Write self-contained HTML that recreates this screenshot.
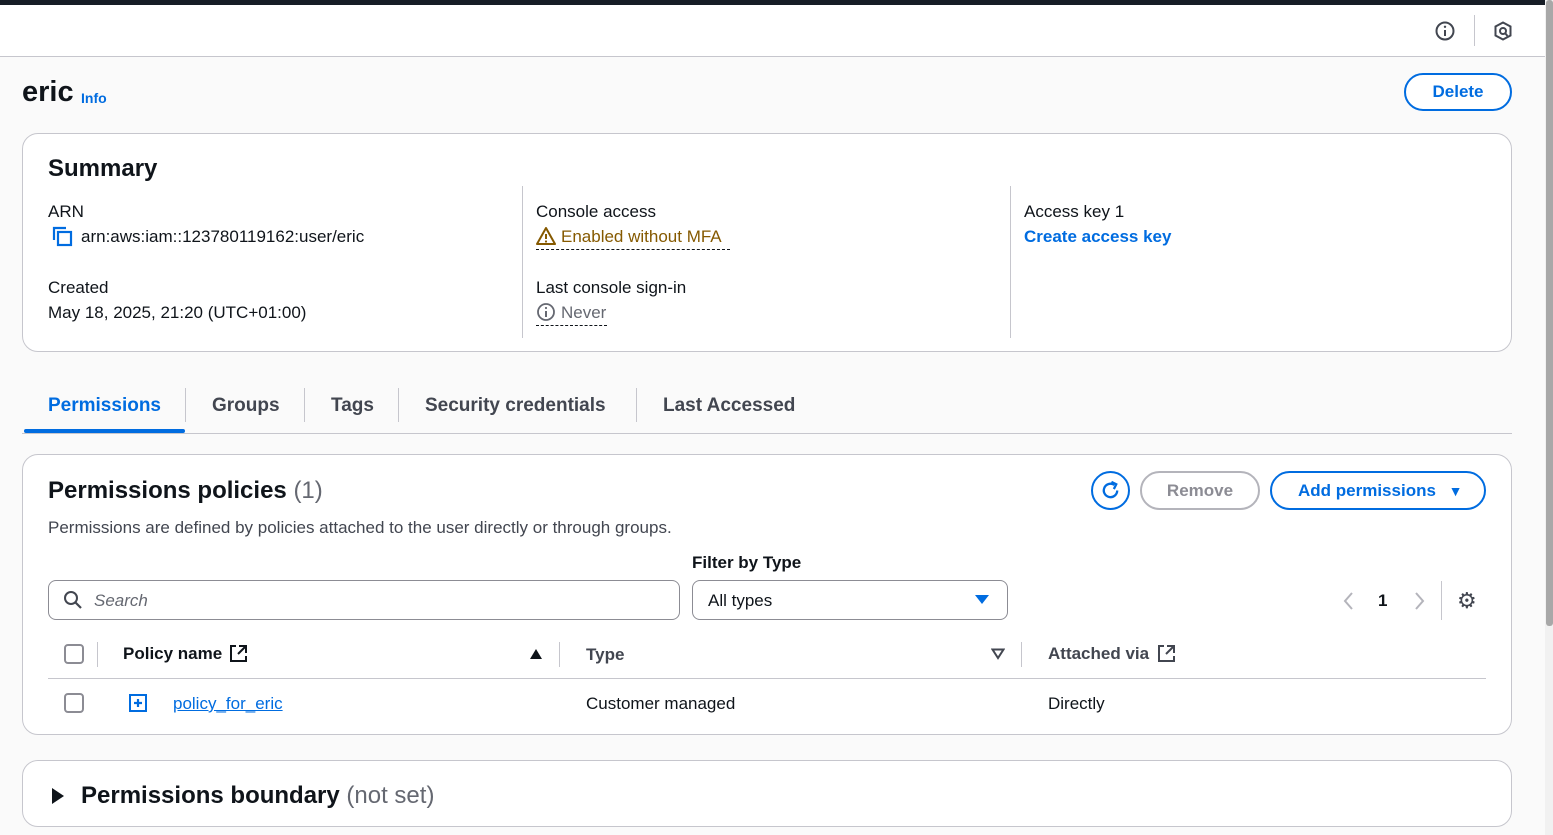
<!DOCTYPE html>
<html><head><meta charset="utf-8"><style>
*{box-sizing:border-box;margin:0;padding:0}
body{width:1553px;height:835px;overflow:hidden;background:#fafafa;font-family:"Liberation Sans",sans-serif;color:#0f141a;position:relative;font-size:16px}
.abs{position:absolute;white-space:nowrap}
.top{position:absolute;left:0;top:0;width:1553px;height:5px;background:#161d26}
.hdr{position:absolute;left:0;top:5px;width:1545px;height:52px;background:#fff;border-bottom:1px solid #c6c6cd}
.sb{position:absolute;left:1545px;top:0;width:8px;height:835px;background:#f1f1f1}
.sbt{position:absolute;left:1546px;top:0;width:7px;height:626px;background:#a8a8a8;border-radius:3px}
.card{position:absolute;background:#fff;border:1px solid #c6c6cd;border-radius:16px}
.btn{position:absolute;border:2px solid #006ce0;border-radius:20px;color:#006ce0;font-weight:bold;font-size:17px;text-align:center;background:#fff}
.lbl{color:#0f141a;font-size:17px}
.blue{color:#006ce0}
.vline{position:absolute;width:1px;background:#c6c6cd}
.tab{position:absolute;top:395px;font-size:19px;font-weight:bold;color:#424650}
.cb{position:absolute;width:20px;height:20px;border:2px solid #8c8c94;border-radius:4px;background:#fff}
</style></head><body>
<div class="top"></div>
<div class="hdr"></div>
<svg class="abs" style="left:1434px;top:20px" width="22" height="22" viewBox="0 0 22 22"><circle cx="11" cy="11" r="8.5" fill="none" stroke="#424650" stroke-width="2"/><line x1="11" y1="10" x2="11" y2="16" stroke="#424650" stroke-width="2"/><circle cx="11" cy="6.8" r="1.2" fill="#424650"/></svg>
<div class="vline" style="left:1474px;top:15px;height:31px"></div>
<svg class="abs" style="left:1492px;top:20px" width="22" height="22" viewBox="0 0 22 22"><path d="M11 2.5 L18.5 6.5 V15.5 L11 19.5 L3.5 15.5 V6.5 Z" fill="none" stroke="#424650" stroke-width="2"/><circle cx="11" cy="11" r="3" fill="none" stroke="#424650" stroke-width="2"/><path d="M13 13 L15.5 16" stroke="#424650" stroke-width="2"/></svg>

<div class="abs" style="left:22px;top:76px;font-size:29px;font-weight:bold">eric</div>
<div class="abs blue" style="left:81px;top:90px;font-size:14px;font-weight:bold">Info</div>
<div class="btn" style="left:1404px;top:73px;width:108px;height:38px;line-height:34px">Delete</div>

<div class="card" style="left:22px;top:133px;width:1490px;height:219px"></div>
<div class="abs" style="left:48px;top:155px;font-size:24px;font-weight:bold">Summary</div>
<div class="vline" style="left:522px;top:186px;height:152px"></div>
<div class="vline" style="left:1010px;top:186px;height:152px"></div>
<div class="abs lbl" style="left:48px;top:202px">ARN</div>
<svg class="abs" style="left:52px;top:226px" width="22" height="22" viewBox="0 0 22 22"><path d="M2 14 V2 H14" fill="none" stroke="#006ce0" stroke-width="2.2"/><rect x="6" y="6" width="13" height="13" fill="none" stroke="#006ce0" stroke-width="2.2"/></svg>
<div class="abs lbl" style="left:81px;top:227px">arn:aws:iam::123780119162:user/eric</div>
<div class="abs lbl" style="left:48px;top:278px">Created</div>
<div class="abs lbl" style="left:48px;top:303px">May 18, 2025, 21:20 (UTC+01:00)</div>
<div class="abs lbl" style="left:536px;top:202px">Console access</div>
<div class="abs" style="left:536px;top:226px;width:194px;height:24px;border-bottom:1px dashed #0f141a"></div>
<svg class="abs" style="left:536px;top:226px" width="20" height="20" viewBox="0 0 20 20"><path d="M10 2 L19 18 H1 Z" fill="none" stroke="#855900" stroke-width="2" stroke-linejoin="round"/><line x1="10" y1="8" x2="10" y2="13" stroke="#855900" stroke-width="2"/><circle cx="10" cy="15.5" r="1.1" fill="#855900"/></svg>
<div class="abs" style="left:561px;top:227px;color:#855900;font-size:17px">Enabled without MFA</div>
<div class="abs lbl" style="left:536px;top:278px">Last console sign-in</div>
<svg class="abs" style="left:536px;top:302px" width="20" height="20" viewBox="0 0 20 20"><circle cx="10" cy="10" r="8" fill="none" stroke="#656871" stroke-width="1.8"/><line x1="10" y1="9" x2="10" y2="15" stroke="#656871" stroke-width="2"/><circle cx="10" cy="6" r="1.1" fill="#656871"/></svg>
<div class="abs" style="left:561px;top:303px;color:#656871;font-size:17px">Never</div>
<div class="abs" style="left:536px;top:325px;width:71px;border-bottom:1px dashed #0f141a"></div>
<div class="abs lbl" style="left:1024px;top:202px">Access key 1</div>
<div class="abs blue" style="left:1024px;top:227px;font-weight:bold;font-size:17px">Create access key</div>

<div class="tab" style="left:48px;color:#006ce0">Permissions</div>
<div class="tab" style="left:212px">Groups</div>
<div class="tab" style="left:331px">Tags</div>
<div class="tab" style="left:425px">Security credentials</div>
<div class="tab" style="left:663px">Last Accessed</div>
<div class="vline" style="left:185px;top:388px;height:34px"></div>
<div class="vline" style="left:304px;top:388px;height:34px"></div>
<div class="vline" style="left:398px;top:388px;height:34px"></div>
<div class="vline" style="left:636px;top:388px;height:34px"></div>
<div class="abs" style="left:22px;top:433px;width:1490px;height:1px;background:#c6c6cd"></div>
<div class="abs" style="left:24px;top:429px;width:161px;height:4px;background:#006ce0;border-radius:2px"></div>

<div class="card" style="left:22px;top:454px;width:1490px;height:281px"></div>
<div class="abs" style="left:48px;top:477px;font-size:24px;font-weight:bold">Permissions policies <span style="font-weight:normal;color:#656871">(1)</span></div>
<div class="abs" style="left:48px;top:518px;color:#424650;font-size:17px">Permissions are defined by policies attached to the user directly or through groups.</div>
<div class="abs" style="left:1091px;top:471px;width:39px;height:39px;border:2px solid #006ce0;border-radius:50%;background:#fff"></div>
<svg class="abs" style="left:1099px;top:479px" width="23" height="23" viewBox="0 0 24 24"><path d="M19 12 A7 7 0 1 1 16 6.2" fill="none" stroke="#006ce0" stroke-width="2.4"/><path d="M13 3 L18 5.5 L15.5 10.5" fill="none" stroke="#006ce0" stroke-width="2.4"/></svg>
<div class="btn" style="left:1140px;top:471px;width:120px;height:39px;line-height:35px;border-color:#b4b4bb;color:#8c8c94">Remove</div>
<div class="btn" style="left:1270px;top:471px;width:216px;height:39px;line-height:35px;text-align:left;padding-left:26px">Add permissions <span style="font-size:14px;margin-left:8px">▼</span></div>

<div class="abs" style="left:692px;top:553px;font-weight:bold;font-size:17px">Filter by Type</div>
<div class="abs" style="left:48px;top:580px;width:632px;height:40px;border:1px solid #8c8c94;border-radius:8px;background:#fff"></div>
<svg class="abs" style="left:63px;top:590px" width="20" height="20" viewBox="0 0 20 20"><circle cx="8" cy="8" r="6" fill="none" stroke="#424650" stroke-width="2"/><line x1="12.5" y1="12.5" x2="18" y2="18" stroke="#424650" stroke-width="2.2"/></svg>
<div class="abs" style="left:94px;top:591px;font-style:italic;color:#656871;font-size:17px">Search</div>
<div class="abs" style="left:692px;top:580px;width:316px;height:40px;border:1px solid #8c8c94;border-radius:8px;background:#fff"></div>
<div class="abs" style="left:708px;top:591px;font-size:17px">All types</div>
<svg class="abs" style="left:974px;top:594px" width="16" height="12" viewBox="0 0 16 12"><path d="M1 1 H15 L8 10 Z" fill="#006ce0"/></svg>
<svg class="abs" style="left:1342px;top:591px" width="14" height="20" viewBox="0 0 14 20"><path d="M10 2 L3 10 L10 18" fill="none" stroke="#b4b4bb" stroke-width="2"/></svg>
<div class="abs" style="left:1378px;top:591px;font-weight:bold;font-size:17px">1</div>
<svg class="abs" style="left:1412px;top:591px" width="14" height="20" viewBox="0 0 14 20"><path d="M4 2 L11 10 L4 18" fill="none" stroke="#b4b4bb" stroke-width="2"/></svg>
<div class="vline" style="left:1441px;top:581px;height:39px"></div>
<div class="abs" style="left:1457px;top:588px;font-size:22px;color:#424650">⚙</div>

<div class="cb" style="left:64px;top:644px"></div>
<div class="vline" style="left:97px;top:642px;height:25px"></div>
<div class="abs" style="left:123px;top:644px;font-weight:bold;font-size:17px">Policy name</div>
<svg class="abs" style="left:229px;top:644px" width="19" height="19" viewBox="0 0 19 19"><path d="M7 2 H2 V17 H17 V12" fill="none" stroke="#0f141a" stroke-width="2"/><path d="M10 2 H17 V9 M17 2 L9 10" fill="none" stroke="#0f141a" stroke-width="2"/></svg>
<svg class="abs" style="left:529px;top:648px" width="14" height="12" viewBox="0 0 14 12"><path d="M1 11 H13 L7 1 Z" fill="#0f141a"/></svg>
<div class="vline" style="left:559px;top:642px;height:25px"></div>
<div class="abs" style="left:586px;top:645px;font-weight:bold;font-size:17px;color:#424650">Type</div>
<svg class="abs" style="left:991px;top:648px" width="14" height="12" viewBox="0 0 14 12"><path d="M1.5 1.5 H12.5 L7 10 Z" fill="none" stroke="#424650" stroke-width="2"/></svg>
<div class="vline" style="left:1021px;top:642px;height:25px"></div>
<div class="abs" style="left:1048px;top:644px;font-weight:bold;font-size:17px;color:#424650">Attached via</div>
<svg class="abs" style="left:1157px;top:644px" width="19" height="19" viewBox="0 0 19 19"><path d="M7 2 H2 V17 H17 V12" fill="none" stroke="#424650" stroke-width="2"/><path d="M10 2 H17 V9 M17 2 L9 10" fill="none" stroke="#424650" stroke-width="2"/></svg>
<div class="abs" style="left:48px;top:678px;width:1438px;height:1px;background:#c6c6cd"></div>
<div class="cb" style="left:64px;top:693px"></div>
<svg class="abs" style="left:128px;top:693px" width="20" height="20" viewBox="0 0 20 20"><rect x="2" y="2" width="16" height="16" fill="none" stroke="#006ce0" stroke-width="2"/><path d="M10 6 V14 M6 10 H14" stroke="#006ce0" stroke-width="2.2"/></svg>
<div class="abs blue" style="left:173px;top:694px;text-decoration:underline;font-size:17px">policy_for_eric</div>
<div class="abs" style="left:586px;top:694px;font-size:17px">Customer managed</div>
<div class="abs" style="left:1048px;top:694px;font-size:17px">Directly</div>

<div class="card" style="left:22px;top:760px;width:1490px;height:67px"></div>
<svg class="abs" style="left:51px;top:787px" width="14" height="18" viewBox="0 0 14 18"><path d="M1 1 L13 9 L1 17 Z" fill="#0f141a"/></svg>
<div class="abs" style="left:81px;top:782px;font-size:24px;font-weight:bold">Permissions boundary <span style="font-weight:normal;color:#656871">(not set)</span></div>

<div class="sb"></div><div class="sbt"></div>
</body></html>
